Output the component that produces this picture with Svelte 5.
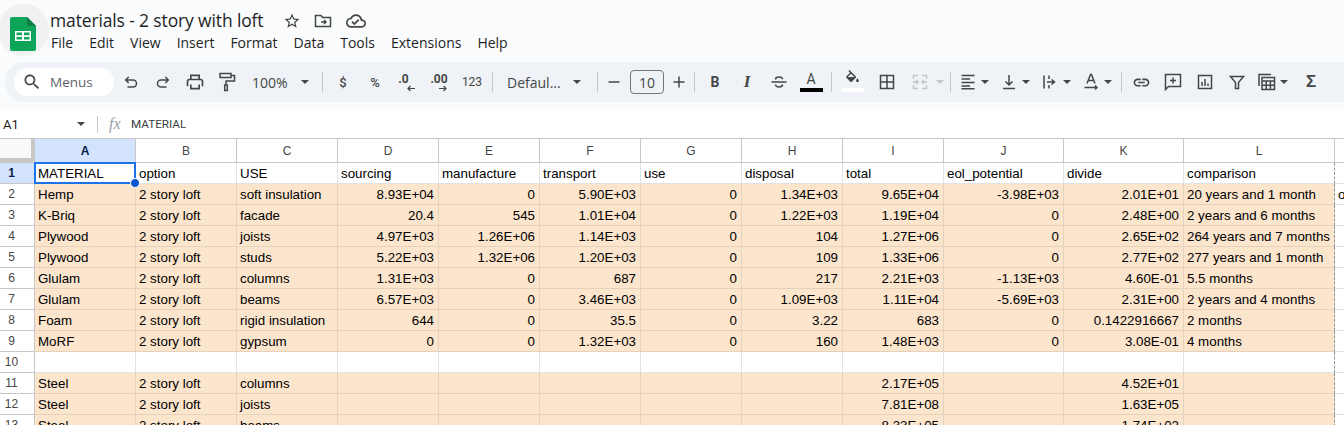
<script>
  const cols = ['A','B','C','D','E','F','G','H','I','J','K','L'];
  const raw = [
    ['MATERIAL','option','USE','sourcing','manufacture','transport','use','disposal','total','eol_potential','divide','comparison'],
    ['Hemp','2 story loft','soft insulation','8.93E+04','0','5.90E+03','0','1.34E+03','9.65E+04','-3.98E+03','2.01E+01','20 years and 1 month'],
    ['K-Briq','2 story loft','facade','20.4','545','1.01E+04','0','1.22E+03','1.19E+04','0','2.48E+00','2 years and 6 months'],
    ['Plywood','2 story loft','joists','4.97E+03','1.26E+06','1.14E+03','0','104','1.27E+06','0','2.65E+02','264 years and 7 months'],
    ['Plywood','2 story loft','studs','5.22E+03','1.32E+06','1.20E+03','0','109','1.33E+06','0','2.77E+02','277 years and 1 month'],
    ['Glulam','2 story loft','columns','1.31E+03','0','687','0','217','2.21E+03','-1.13E+03','4.60E-01','5.5 months'],
    ['Glulam','2 story loft','beams','6.57E+03','0','3.46E+03','0','1.09E+03','1.11E+04','-5.69E+03','2.31E+00','2 years and 4 months'],
    ['Foam','2 story loft','rigid insulation','644','0','35.5','0','3.22','683','0','0.1422916667','2 months'],
    ['MoRF','2 story loft','gypsum','0','0','1.32E+03','0','160','1.48E+03','0','3.08E-01','4 months'],
    ['','','','','','','','','','','',''],
    ['Steel','2 story loft','columns','','','','','','2.17E+05','','4.52E+01',''],
    ['Steel','2 story loft','joists','','','','','','7.81E+08','','1.63E+05',''],
    ['Steel','2 story loft','beams','','','','','','8.33E+05','','1.74E+02','']
  ];
  const menus = ['File','Edit','View','Insert','Format','Data','Tools','Extensions','Help'];
  const rows = raw.map((cells, i) => ({
    n: i + 1,
    cells,
    tint: i !== 0 && i !== 9,
    head: i === 0
  }));
</script>

<div class="page">
  <header class="head">
    <div class="logo-wrap">
      <svg class="logo" width="26" height="34" viewBox="0 0 26 34">
        <path d="M2 0H17L26 9V32a2 2 0 0 1-2 2H2a2 2 0 0 1-2-2V2a2 2 0 0 1 2-2z" fill="#0ea55a"/>
        <path d="M17 0L26 9H19a2 2 0 0 1-2-2z" fill="#0a8043"/>
        <path d="M5 14H21V24H5z" fill="#fff"/>
        <path d="M6.5 15.5H12V18.3H6.5zM14 15.5H19.5V18.3H14zM6.5 20H12V22.5H6.5zM14 20H19.5V22.5H14z" fill="#0ea55a"/>
      </svg>
    </div>
    <div class="head-main">
      <div class="title-row">
        <span class="title">materials - 2 story with loft</span>
        <svg class="t-star" width="18" height="18" viewBox="0 0 24 24"><path d="M22 9.24l-7.19-.62L12 2 9.19 8.63 2 9.24l5.46 4.73L5.82 21 12 17.27 18.18 21l-1.63-7.03L22 9.24zM12 15.4l-3.76 2.27 1-4.28-3.32-2.88 4.38-.38L12 6.1l1.71 4.04 4.38.38-3.32 2.88 1 4.28L12 15.4z"/></svg>
        <svg class="t-folder" width="18" height="18" viewBox="0 0 18 18"><path class="st" d="M1.5 14.5V3.5H7L8.5 5.5H16.5V14.5z"/><path class="st" d="M7 10H12M10 8L12 10L10 12"/></svg>
        <svg class="t-cloud" width="20" height="20" viewBox="0 0 24 24"><path d="M19.35 10.04C18.67 6.59 15.64 4 12 4 9.11 4 6.6 5.64 5.35 8.04 2.34 8.36 0 10.91 0 14c0 3.31 2.69 6 6 6h13c2.76 0 5-2.24 5-5 0-2.64-2.05-4.78-4.65-4.96zM19 18H6c-2.21 0-4-1.79-4-4 0-2.05 1.53-3.76 3.56-3.97l1.07-.11.5-.95C8.08 7.14 9.94 6 12 6c2.62 0 4.88 1.86 5.39 4.43l.3 1.5 1.53.11c1.56.1 2.78 1.41 2.78 2.96 0 1.65-1.35 3-3 3zm-9-3.82l-2.09-2.09L6.5 13.5 10 17l6.01-6.01-1.41-1.41z"/></svg>
      </div>
      <nav class="menus">
        {#each menus as m}<span>{m}</span>{/each}
      </nav>
    </div>
  </header>

  <div class="toolbar">
    <div class="pill">
      <svg width="20" height="20" viewBox="0 0 24 24"><path d="M15.5 14h-.79l-.28-.27C15.41 12.59 16 11.11 16 9.5 16 5.91 13.09 3 9.5 3S3 5.91 3 9.5 5.91 16 9.5 16c1.61 0 3.09-.59 4.23-1.57l.27.28v.79l5 4.99L20.49 19l-4.99-5zm-6 0C7.01 14 5 11.99 5 9.5S7.01 5 9.5 5 14 7.01 14 9.5 11.99 14 9.5 14z"/></svg>
      <span>Menus</span>
    </div>
    <div class="ib"><svg width="18" height="18" viewBox="0 0 18 18"><path class="st" d="M4 7H11A3.5 3.5 0 0 1 11 14H5.5M6.7 4L3.7 7L6.7 10"/></svg></div>
    <div class="ib"><svg width="18" height="18" viewBox="0 0 18 18"><path class="st" d="M14 7H7A3.5 3.5 0 0 0 7 14H12.5M11.3 4L14.3 7L11.3 10"/></svg></div>
    <div class="ib"><svg width="20" height="20" viewBox="0 0 24 24"><path d="M19 8h-1V3H6v5H5c-1.66 0-3 1.34-3 3v6h4v4h12v-4h4v-6c0-1.66-1.34-3-3-3zM8 5h8v3H8V5zm8 14H8v-4h8v4zm2-2v-2H6v2H4v-6c0-.55.45-1 1-1h14c.55 0 1 .45 1 1v6h-2z"/></svg></div>
    <div class="ib"><svg width="18" height="20" viewBox="0 0 18 20"><path class="st" d="M2 1.5H13V5.5H2zM13 3.5H16.5V9H8V13"/><path class="st" d="M6.7 13H9.3V18.5H6.7z"/></svg></div>
    <div class="zoom-dd"><span>100%</span><i class="caret"></i></div>
    <i class="sep"></i>
    <div class="ib tx">$</div>
    <div class="ib tx">%</div>
    <div class="ib dec one"><b>.0</b><svg width="10" height="7" viewBox="0 0 10 7"><path class="st thin" d="M9 3.5H2M4.5 1L2 3.5L4.5 6"/></svg></div>
    <div class="ib dec"><b>.00</b><svg width="10" height="7" viewBox="0 0 10 7"><path class="st thin" d="M1 3.5H8M5.5 1L8 3.5L5.5 6"/></svg></div>
    <div class="ib tx num">123</div>
    <i class="sep"></i>
    <div class="font-dd"><span>Defaul...</span><i class="caret"></i></div>
    <i class="sep"></i>
    <div class="ib narrow"><svg width="14" height="14" viewBox="0 0 14 14"><path class="st" d="M1.5 7H12.5"/></svg></div>
    <div class="size">10</div>
    <div class="ib narrow plus"><svg width="14" height="14" viewBox="0 0 14 14"><path class="st" d="M1.5 7H12.5M7 1.5V12.5"/></svg></div>
    <i class="sep"></i>
    <div class="ib glyph bold">B</div>
    <div class="ib glyph ital">I</div>
    <div class="ib"><svg width="18" height="18" viewBox="0 0 18 18"><path class="st" d="M1.5 9H16.5M5.5 6.5C5.5 4.8 7 4 9 4S12.5 4.8 12.5 6.2M5.5 11.5C5.7 13.2 7 14 9 14S12.5 13.2 12.5 11.5"/></svg></div>
    <div class="ib color"><span>A</span><i class="bar black"></i></div>
    <i class="sep"></i>
    <div class="ib color fill"><svg width="17" height="17" viewBox="0 0 24 24"><path d="M16.56 8.94L7.62 0 6.21 1.41l2.38 2.38-5.15 5.15c-.59.59-.59 1.54 0 2.12l5.5 5.5c.29.29.68.44 1.06.44s.77-.15 1.06-.44l5.5-5.5c.59-.58.59-1.53 0-2.12zM5.21 10L10 5.21 14.79 10H5.21zM19 11.5s-2 2.17-2 3.5c0 1.1.9 2 2 2s2-.9 2-2c0-1.33-2-3.5-2-3.5z"/></svg><i class="bar white"></i></div>
    <div class="ib borders"><svg width="18" height="18" viewBox="0 0 18 18"><path class="st" d="M2.5 2.5H15.5V15.5H2.5zM9 2.5V15.5M2.5 9H15.5"/></svg></div>
    <div class="ib merge"><svg width="18" height="18" viewBox="0 0 18 18"><path class="st off" d="M2.5 6V2.5H7M11 2.5H15.5V6M2.5 12V15.5H7M11 15.5H15.5V12M2 9H6.5M5 7L7 9L5 11M16 9H11.5M13 7L11 9L13 11"/></svg></div>
    <i class="caret off mcaret"></i>
    <i class="sep"></i>
    <div class="dd"><svg width="18" height="18" viewBox="0 0 18 18"><path class="st" d="M2.5 2.5H15.5M2.5 6H11M2.5 9.5H15.5M2.5 13H11M2.5 15.8H15.5"/></svg><i class="caret"></i></div>
    <div class="dd"><svg width="18" height="18" viewBox="0 0 18 18"><path class="st" d="M9 2V11.5M5.5 8.5L9 12L12.5 8.5M3 15.5H15"/></svg><i class="caret"></i></div>
    <div class="dd"><svg width="18" height="18" viewBox="0 0 18 18"><path class="st" d="M3 2.5V15.5M8 2.5V6M8 12V15.5M6 9H13M10.5 6.5L13.5 9L10.5 11.5"/></svg><i class="caret"></i></div>
    <div class="dd"><svg width="18" height="18" viewBox="0 0 18 18"><path class="st" d="M5 10.5L8.5 1.5H9.5L13 10.5M6.2 7.5H11.8M2.5 14.5H15M13 12.5L15 14.5L13 16.5"/></svg><i class="caret"></i></div>
    <i class="sep sep-tight"></i>
    <div class="ib"><svg width="19" height="19" viewBox="0 0 24 24"><path d="M17 7h-4v2h4c1.65 0 3 1.35 3 3s-1.35 3-3 3h-4v2h4c2.76 0 5-2.24 5-5s-2.24-5-5-5zm-6 8H7c-1.65 0-3-1.35-3-3s1.35-3 3-3h4V7H7c-2.76 0-5 2.24-5 5s2.24 5 5 5h4v-2zm-3-4h8v2H8z"/></svg></div>
    <div class="ib"><svg width="18" height="18" viewBox="0 0 18 18"><path class="st" d="M1.5 1.5H16.5V13.5H4.5L1.5 16.5zM9 4.5V10.5M6 7.5H12"/></svg></div>
    <div class="ib"><svg width="18" height="18" viewBox="0 0 18 18"><path class="st" d="M2.5 2.5H15.5V15.5H2.5zM6 9V13M9 6V13M12 10.5V13"/></svg></div>
    <div class="ib"><svg width="18" height="18" viewBox="0 0 18 18"><path class="st" d="M2.5 3.5H15.5L10.5 9.5V15.5H7.5V9.5z"/></svg></div>
    <div class="dd dd-fn"><svg width="18" height="18" viewBox="0 0 18 18"><path class="st" d="M1 13V1.5H13M4 4.5H16.5V16.5H4zM4 8H16.5M4 12.3H16.5M8.2 8V16.5M12.4 8V16.5"/></svg><i class="caret"></i></div>
    <div class="ib glyph sigma">Σ</div>
  </div>

  <div class="fbar">
    <span class="ref">A1</span>
    <i class="caret"></i>
    <i class="sep"></i>
    <span class="fx">fx</span>
    <span class="ftext">MATERIAL</span>
  </div>

  <div class="sheet">
    <div class="corner"></div>
    {#each cols as c}
      <div class="ch" class:on={c === 'A'}>{c}</div>
    {/each}
    <div class="ch blank"></div>
    {#each rows as r}
      <div class="rh" class:on={r.head}>{r.n}</div>
      {#each r.cells as v, i}
        <div class="cell" class:tint={r.tint} class:right={!r.head && i >= 3 && i <= 10} class:last={i === 11}>
          {#if r.n === 1 && i === 0}<span class="sel"><i class="handle"></i></span>{/if}
          {v}
        </div>
      {/each}
      <div class="cell over">{r.n === 2 ? 'o' : ''}</div>
    {/each}
  </div>
</div>

<style>
  :global(body) { margin: 0; overflow: hidden; background: #fff; }
  .page { width: 1344px; height: 425px; overflow: hidden; background: #f9fbfd; font-family: "Open Sans", "Noto Sans", sans-serif; color: #1f1f1f; }
  svg { fill: #444746; flex: none; display: block; }
  .st { fill: none; stroke: #444746; stroke-width: 1.5; }
  .st.off { stroke: #c4c7c5; }
  .st.thin { stroke-width: 1.2; }

  .head { display: flex; height: 62px; }
  .logo-wrap { width: 51px; height: 52px; margin: 4px -1px 0 -2px; border-radius: 50%; background: #eff1f2; display: flex; align-items: center; justify-content: center; padding-right: 1px; box-sizing: border-box; flex: none; }
  .logo { margin-top: 8px; margin-left: 0; }
  .head-main { display: flex; flex-direction: column; padding-left: 2px; }
  .title-row { display: flex; align-items: center; height: 26px; margin-top: 8px; }
  .title { font-size: 17.5px; letter-spacing: -0.14px; line-height: 26px; width: 233px; white-space: nowrap; margin-top: -2px; }
  .t-folder { margin-left: 13px; }
  .t-cloud { margin-left: 14px; }
  .menus { display: flex; gap: 16px; font-size: 14px; line-height: 20px; color: #1f1f1f; padding-left: 1px; margin-top: -1px; }

  .toolbar { display: flex; align-items: center; height: 40px; margin: 0 0 8px 5px; padding-left: 9px; background: #eff2f7; border-radius: 20px 0 0 20px; box-sizing: border-box; }
  .pill { display: flex; align-items: center; gap: 8px; width: 100px; height: 28px; padding-left: 8px; margin-right: 1px; box-sizing: border-box; background: #fff; border-radius: 14px; font-size: 13.5px; color: #5e6368; flex: none; }
  .ib { width: 32px; height: 28px; display: flex; flex-direction: column; align-items: center; justify-content: center; flex: none; color: #444746; }
  .ib.narrow { width: 24px; }
  .ib.plus { width: 23px; margin-left: 3px; }
  .tx { font-size: 13px; font-weight: 500; font-family: "Roboto", sans-serif; }
  .tx.num { font-size: 12px; font-weight: 400; margin-left: 1px; width: 32px; }
  .dec b { font: 700 12px/10px "Roboto", sans-serif; margin-top: 1px; }
  .dec svg { margin: 1px 0 0 8px; }
  .dec.one b { margin-right: 7px; }
  .caret { display: block; width: 0; height: 0; border: 4.5px solid transparent; border-top: 4.5px solid #444746; border-bottom-width: 0; flex: none; }
  .caret.off { border-top-color: #c4c7c5; }
  .sep { display: block; width: 1px; height: 20px; margin: 0 4px; background: #c7c7c7; flex: none; }
  .sep-tight { margin: 0 3px 0 2px; }
  .zoom-dd { width: 75px; display: flex; align-items: center; padding-left: 9px; box-sizing: border-box; font-size: 14px; color: #444746; flex: none; }
  .zoom-dd span { width: 49px; }
  .font-dd { width: 96px; display: flex; align-items: center; padding-left: 10px; box-sizing: border-box; font-size: 14px; color: #444746; flex: none; }
  .font-dd span { width: 66px; }
  .size { width: 34px; height: 24px; margin-left: 4px; border: 1px solid #747775; border-radius: 4px; box-sizing: border-box; display: flex; align-items: center; justify-content: center; font-size: 14px; color: #444746; flex: none; }
  .glyph { font-family: "Roboto", sans-serif; font-size: 14px; }
  .bold { font-weight: 700; }
  .ital { font-weight: 700; font-style: italic; font-family: "Liberation Serif", serif; font-size: 17px; }
  .sigma { font-family: "Liberation Sans", sans-serif; font-weight: 700; font-size: 17px; }
  .color { position: relative; justify-content: flex-start; }
  .color span { font: 400 14px/17px "Roboto", sans-serif; margin-top: 3px; }
  .bar { display: block; width: 23px; height: 4px; position: absolute; top: 20px; left: 5px; }
  .black { background: #000; }
  .white { background: #fff; }
  .fill svg { margin-top: 2px; }
  .borders { margin-left: 3px; }
  .merge { margin-left: 1px; }
  .mcaret { margin-left: 0; margin-right: 2px; }
  .dd { width: 41px; display: flex; align-items: center; gap: 4px; padding-left: 4px; box-sizing: border-box; flex: none; }
  .dd-fn { width: 42px; padding-left: 5px; }

  .fbar { display: flex; align-items: center; height: 28px; background: #fff; font-family: "Roboto", sans-serif; font-size: 12px; color: #1f1f1f; }
  .ref { width: 74px; padding-left: 3px; box-sizing: content-box; font-size: 13px; }
  .fbar .sep { height: 17px; margin: 0 11px 0 12px; }
  .fx { width: 22px; font: italic 16px/20px "Liberation Serif", serif; color: #9aa0a6; }
  .ftext { color: #3c4043; font-size: 11.7px; }

  .sheet { display: grid; grid-template-columns: 35px repeat(9, 101px) 120px 120px 151px 10px; grid-auto-rows: 21px; grid-template-rows: 25px; background: #fff; font-family: "Liberation Sans", Arial, sans-serif; font-size: 13.33px; color: #000; }
  .corner { background: #f8f9fa; border-top: 1px solid #c7c7c7; border-right: 4px solid #c7c7c7; border-bottom: 5px solid #c7c7c7; box-sizing: border-box; }
  .ch { display: flex; align-items: center; justify-content: center; box-sizing: border-box; border-top: 1px solid #c7c7c7; border-right: 1px solid #c7c7c7; border-bottom: 1px solid #c7c7c7; background: #fff; font: 12px/1 "Liberation Sans", sans-serif; color: #444746; }
  .ch.on { background: #d3e3fd; font-weight: 700; color: #041e49; }
  .ch.blank { border-right: 0; }
  .rh { display: flex; align-items: center; justify-content: center; padding-right: 11px; box-sizing: border-box; border-right: 1px solid #c7c7c7; border-bottom: 1px solid #c7c7c7; background: #fff; font: 12px/1 "Liberation Sans", sans-serif; color: #444746; }
  .rh.on { background: #d3e3fd; font-weight: 700; color: #041e49; }
  .cell { position: relative; box-sizing: border-box; padding: 2px 4px 0 3px; line-height: 17px; white-space: nowrap; overflow: hidden; border-right: 1px solid #e1e3e3; border-bottom: 1px solid #e1e3e3; }
  .cell.tint { background: #fce5cd; border-color: #e6d2bc; }
  .cell.right { text-align: right; }
  .cell.last { border-right: 1px dashed #8f9398; }
  .cell.over { border-right: 0; overflow: visible; }
  .cell:has(.sel) { overflow: visible; z-index: 2; }
  .sel { position: absolute; left: -1px; top: -1px; width: 102px; height: 22px; box-sizing: border-box; border: 2px solid #1a73e8; }
  .handle { position: absolute; right: -6px; bottom: -6px; border-radius: 50%; background: #0b57d0; border: 1px solid #fff; box-sizing: content-box; width: 8px; height: 8px; }
</style>
